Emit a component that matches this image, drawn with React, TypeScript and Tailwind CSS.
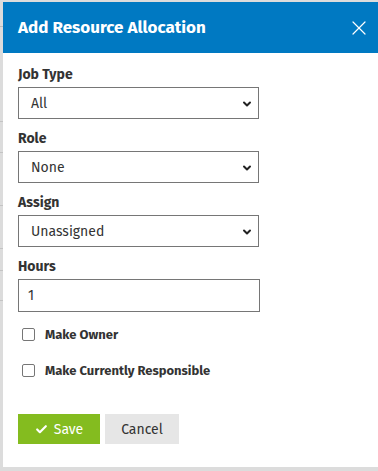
import { Check, X, ChevronDown } from "lucide-react";

const font = { fontFamily: '"Fira Sans", Lato, "Open Sans", sans-serif' };

function Select({ value }: { value: string }) {
  return (
    <div className="relative w-[241px] h-[32px] border border-[#767676] bg-white flex items-center pl-[12px] text-[14px] text-[#333]">
      {value}
      <ChevronDown className="absolute right-[5px] top-[10px] w-[12px] h-[12px] text-[#222]" strokeWidth={4} />
    </div>
  );
}

function Field({ label, children }: { label: string; children: React.ReactNode }) {
  return (
    <div className="flex flex-col">
      <label className="text-[14px] font-bold text-[#333] leading-[18px] mb-[3px]">{label}</label>
      {children}
    </div>
  );
}

function Check2({ label }: { label: string }) {
  return (
    <label className="flex items-center gap-[10px] pl-[4px] text-[13px] font-bold text-[#333]">
      <span className="w-[13px] h-[13px] border border-[#767676] rounded-[2px] bg-white" />
      {label}
    </label>
  );
}

export default function App() {
  return (
    <div className="relative w-[378px] h-[471px] bg-[#dcdcdc] overflow-hidden" style={font}>
      {/* backdrop rows */}
      <div className="absolute left-0 top-[26px] w-[3px] h-px bg-[#bbb]" />
      <div className="absolute left-0 top-[121px] w-[3px] h-px bg-[#c4c4c4]" />
      <div className="absolute left-0 top-[152px] w-[3px] h-px bg-[#c4c4c4]" />
      <div className="absolute left-0 top-[205px] w-[3px] h-px bg-[#c4c4c4]" />
      <div className="absolute left-0 top-[248px] w-[3px] h-px bg-[#c4c4c4]" />
      <div className="absolute left-0 top-[270px] w-[3px] h-px bg-[#c4c4c4]" />
      <div className="absolute left-0 top-[300px] w-[3px] h-px bg-[#c4c4c4]" />

      <div className="absolute left-[3px] top-[2px] w-[380px] h-[465px] bg-white">
        <div className="h-[51px] bg-[#0079c2] flex items-center justify-between pl-[15px] pr-[12px]">
          <h2 className="text-white text-[17px] font-bold">Add Resource Allocation</h2>
          <X className="w-[24px] h-[24px] text-white" strokeWidth={1.2} />
        </div>

        <div className="pl-[15px] pt-[13px] flex flex-col gap-[11px]">
          <Field label="Job Type"><Select value="All" /></Field>
          <Field label="Role"><Select value="None" /></Field>
          <Field label="Assign"><Select value="Unassigned" /></Field>
          <Field label="Hours">
            <div className="w-[242px] h-[33px] border border-[#767676] flex items-center pl-[9px] text-[14px] text-[#333]">1</div>
          </Field>
        </div>

        <div className="pl-[15px] mt-[13px] flex flex-col gap-[16px]">
          <Check2 label="Make Owner" />
          <Check2 label="Make Currently Responsible" />
        </div>

        <div className="pl-[15px] mt-[34px] flex gap-[5px]">
          <button className="w-[82px] h-[30px] bg-[#84bc1f] text-white text-[14px] flex items-center justify-center gap-[6px]">
            <Check className="w-[13px] h-[13px]" strokeWidth={4} />
            Save
          </button>
          <button className="w-[74px] h-[30px] bg-[#e6e6e6] text-[#333] text-[14px]">Cancel</button>
        </div>
      </div>
    </div>
  );
}
